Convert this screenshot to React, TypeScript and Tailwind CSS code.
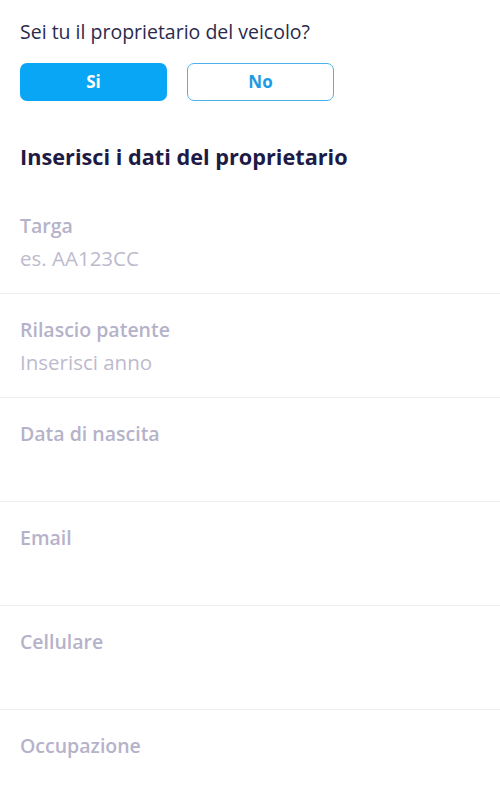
import React from "react";

const fields = [
  { label: "Targa", placeholder: "es. AA123CC" },
  { label: "Rilascio patente", placeholder: "Inserisci anno" },
  { label: "Data di nascita", placeholder: "" },
  { label: "Email", placeholder: "" },
  { label: "Cellulare", placeholder: "" },
  { label: "Occupazione", placeholder: "" },
];

const App = () => {
  return (
    <div className="w-[500px] h-[800px] overflow-hidden bg-white font-['Open_Sans','Noto_Sans',sans-serif]">
      <div className="px-[20px] pt-[20px]">
        <p className="text-[19.5px] leading-[24px] text-[#2b2a4c]">Sei tu il proprietario del veicolo?</p>
        <div className="flex gap-[20px] mt-[19px]">
          <button className="w-[147px] h-[38px] rounded-[7px] bg-[#0aa6f6] text-white text-[17px] font-bold">
            Si
          </button>
          <button className="w-[147px] h-[38px] rounded-[7px] border-[1.5px] border-[#4db2ea] text-[#1d9ce2] text-[17px] font-bold">
            No
          </button>
        </div>
        <h2 className="mt-[42px] text-[21.7px] leading-[28px] font-bold text-[#1d1b45]">
          Inserisci i dati del proprietario
        </h2>
      </div>
      <div className="mt-[19px] flex flex-col">
        {fields.map((f) => (
          <div key={f.label} className="px-[20px] pt-[24px] pb-[23px] border-b border-[#efeff3]">
            <div className="text-[19.5px] leading-[24px] font-semibold text-[#b5b2c9]">{f.label}</div>
            <div className="mt-[8px] text-[20.5px] leading-[24px] text-[#bdbacd] h-[24px]">{f.placeholder}</div>
          </div>
        ))}
      </div>
    </div>
  );
};

export default App;
